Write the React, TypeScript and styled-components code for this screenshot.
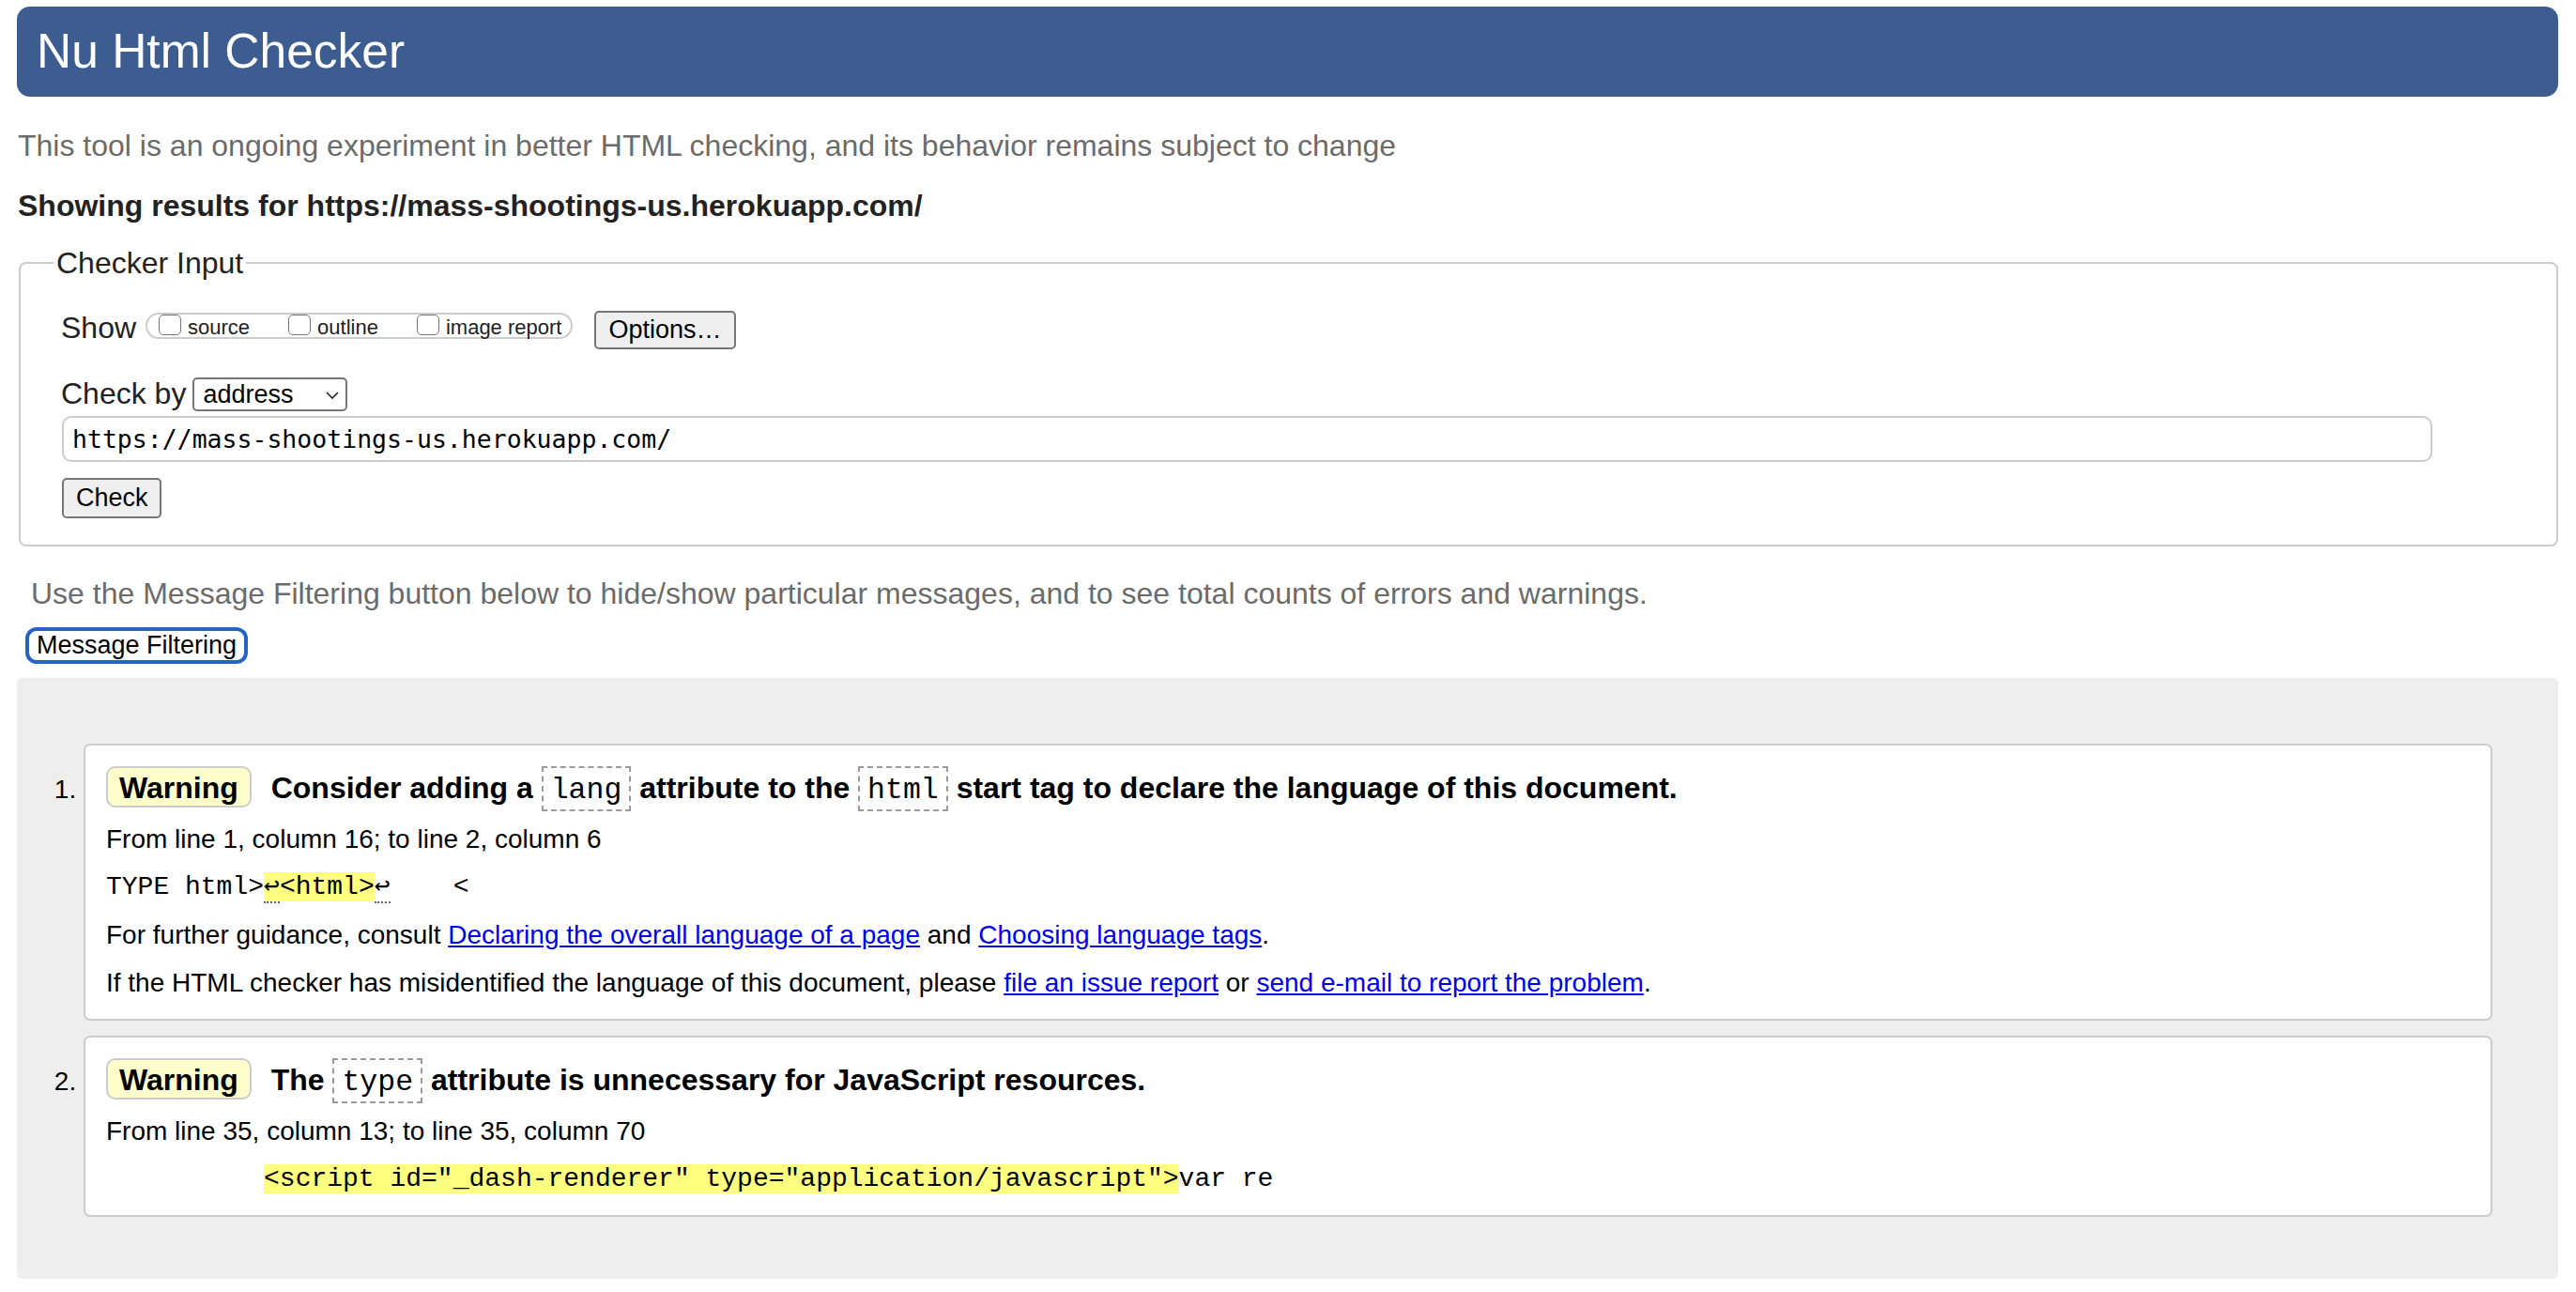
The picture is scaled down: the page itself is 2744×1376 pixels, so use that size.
import React from "react";
import styled, { createGlobalStyle } from "styled-components";

const GlobalStyle = createGlobalStyle`
  html, body { margin: 0; padding: 0; background: #ffffff; }
  body {
    font-family: "Liberation Sans", Arial, Helvetica, sans-serif;
    color: #222222;
  }
  * { box-sizing: border-box; }
`;

const Page = styled.div`
  display: flex;
  flex-direction: column;
  padding: 7px 19px 16px 18px;
`;

const Header = styled.header`
  height: 96px;
  display: flex;
  align-items: center;
  padding-left: 21px;
  background: #3d5d90;
  border-radius: 14px;
`;

const Title = styled.h1`
  margin: 0;
  font-size: 51.5px;
  line-height: 1;
  font-weight: normal;
  color: #ffffff;
`;

const Intro = styled.p<{ $top: number; $indent?: number }>`
  margin: ${(p) => p.$top}px 0 0;
  padding-left: ${(p) => p.$indent ?? 1}px;
  font-size: 32px;
  line-height: 40px;
  color: #6b6b6b;
`;

const ResultsFor = styled.h2`
  margin: 24px 0 0;
  padding-left: 1px;
  font-size: 32px;
  line-height: 40px;
  font-weight: bold;
  color: #222222;
`;

const Fieldset = styled.fieldset`
  margin: 21px 0 0 2px;
  min-width: 0;
  border: 2px solid #cccccc;
  border-radius: 8px;
  padding: 29px 0 28px 43px;
  display: flex;
  flex-direction: column;
  align-items: flex-start;
`;

const Legend = styled.legend`
  margin-left: -8px;
  padding: 0 3px;
  font-size: 32px;
  line-height: 40px;
  color: #222222;
`;

const Row = styled.div<{ $top?: number }>`
  display: flex;
  align-items: flex-start;
  margin-top: ${(p) => p.$top ?? 0}px;
`;

const FieldLabel = styled.span`
  font-size: 32px;
  line-height: 40px;
  color: #222222;
`;

const Group = styled.div`
  margin: 4px 0 0 10px;
  height: 28px;
  display: flex;
  align-items: flex-start;
  gap: 41px;
  padding: 0 10px 0 12px;
  border: 2px solid #cccccc;
  border-radius: 14px;
`;

const OptionLabel = styled.label`
  display: flex;
  align-items: flex-start;
  gap: 7px;
  font-size: 22px;
  line-height: 20px;
  color: #222222;
`;

const OptionText = styled.span`
  padding-top: 4px;
`;

const CheckBox = styled.input`
  appearance: none;
  -webkit-appearance: none;
  margin: 0;
  width: 24px;
  height: 22px;
  border: 1.5px solid #767676;
  border-radius: 5px;
  background: #ffffff;
`;

const Button = styled.button<{ $h: number; $w?: number }>`
  height: ${(p) => p.$h}px;
  ${(p) => (p.$w ? `width: ${p.$w}px;` : "")}
  padding: 0 13px;
  font-family: "Liberation Sans", Arial, Helvetica, sans-serif;
  font-size: 27px;
  color: #000000;
  background: #efefef;
  border: 2px solid #767676;
  border-radius: 5px;
`;

const OptionsButton = styled(Button)`
  margin: 2px 0 0 23px;
`;

const CheckButton = styled(Button)`
  margin: 17px 0 0 1px;
`;

const SelectWrap = styled.div`
  position: relative;
  margin: 3px 0 0 7px;
`;

const Select = styled.select`
  appearance: none;
  -webkit-appearance: none;
  display: block;
  width: 165px;
  height: 36px;
  padding: 0 9px;
  font-family: "Liberation Sans", Arial, Helvetica, sans-serif;
  font-size: 27px;
  color: #000000;
  background: #ffffff;
  border: 2px solid #767676;
  border-radius: 5px;
`;

const Chevron = styled.svg`
  position: absolute;
  right: 9px;
  top: 15px;
  pointer-events: none;
`;

const UrlInput = styled.input`
  margin: 4px 0 0 1px;
  width: 95%;
  height: 49px;
  padding: 0 9px;
  font-family: "DejaVu Sans Mono", "Liberation Mono", monospace;
  font-size: 26.5px;
  color: #000000;
  background: #ffffff;
  border: 2px solid #cccccc;
  border-radius: 10px;
`;

const FilterButton = styled.button`
  align-self: flex-start;
  margin: 16px 0 0 9px;
  height: 39px;
  padding: 0 8px;
  font-family: "Liberation Sans", Arial, Helvetica, sans-serif;
  font-size: 27px;
  color: #000000;
  background: #ffffff;
  border: 4px solid #2463c8;
  border-radius: 12px;
`;

const Results = styled.section`
  margin-top: 15px;
  padding: 70px 70px 66px 71px;
  background: #eeeeee;
  border-radius: 6px;
`;

const MessageList = styled.ol`
  margin: 0;
  padding: 0;
  list-style: decimal outside;
`;

const Message = styled.li`
  font-size: 28px;
  color: #000000;
  background: #ffffff;
  border: 2px solid #cccccc;
  border-radius: 7px;
  padding: 22px 22px 21px;
  & + & {
    margin-top: 16px;
  }
`;

const MessageBody = styled.div`
  display: flex;
  flex-direction: column;
  gap: 17px;
`;

const MessageTitle = styled.p`
  margin: 0 0 -4px;
  font-size: 32px;
  line-height: 40px;
  font-weight: bold;
  color: #000000;
`;

const Badge = styled.strong`
  margin-right: 12px;
  padding: 3px 12px 1px;
  background: #ffffcc;
  border: 2px solid #cccccc;
  border-radius: 10px;
`;

const CodeTok = styled.code`
  display: inline-block;
  padding: 6px 8px 2px;
  font-family: "Liberation Mono", "Courier New", monospace;
  font-size: 31.5px;
  line-height: 36px;
  font-weight: normal;
  border: 2px dashed #9a9a9a;
`;

const Para = styled.p`
  margin: 0;
  font-size: 28px;
  line-height: 34px;
`;

const Extract = styled.p`
  margin: 0;
  font-family: "Liberation Mono", "Courier New", monospace;
  font-size: 28px;
  line-height: 34px;
  white-space: pre;
`;

const Mark = styled.mark`
  background: #ffff80;
  color: inherit;
`;

const LineFeed = styled.span`
  border-bottom: 2px dotted #666666;
`;

const Link = styled.a`
  color: #0000ee;
  text-decoration: underline;
`;

export default function App() {
  return (
    <>
      <GlobalStyle />
      <Page>
        <Header>
          <Title>Nu Html Checker</Title>
        </Header>
        <Intro $top={32}>
          This tool is an ongoing experiment in better HTML checking, and its behavior remains subject to change
        </Intro>
        <ResultsFor>Showing results for https://mass-shootings-us.herokuapp.com/</ResultsFor>

        <Fieldset>
          <Legend>Checker Input</Legend>
          <Row>
            <FieldLabel>Show</FieldLabel>
            <Group>
              <OptionLabel>
                <CheckBox type="checkbox" />
                <OptionText>source</OptionText>
              </OptionLabel>
              <OptionLabel>
                <CheckBox type="checkbox" />
                <OptionText>outline</OptionText>
              </OptionLabel>
              <OptionLabel>
                <CheckBox type="checkbox" />
                <OptionText>image report</OptionText>
              </OptionLabel>
            </Group>
            <OptionsButton type="button" $h={41}>
              Options…
            </OptionsButton>
          </Row>
          <Row $top={27}>
            <FieldLabel>Check by</FieldLabel>
            <SelectWrap>
              <Select defaultValue="address">
                <option value="address">address</option>
                <option value="file">file upload</option>
                <option value="text">text input</option>
              </Select>
              <Chevron width="14" height="8" viewBox="0 0 14 8">
                <polyline points="1,1 7,7 13,1" fill="none" stroke="#222" strokeWidth="1.6" />
              </Chevron>
            </SelectWrap>
          </Row>
          <UrlInput type="url" defaultValue="https://mass-shootings-us.herokuapp.com/" />
          <CheckButton type="button" $h={43} $w={106}>
            Check
          </CheckButton>
        </Fieldset>

        <Intro $top={30} $indent={15}>
          Use the Message Filtering button below to hide/show particular messages, and to see total counts of errors and warnings.
        </Intro>
        <FilterButton type="button">Message Filtering</FilterButton>

        <Results>
          <MessageList>
            <Message>
              <MessageBody>
                <MessageTitle>
                  <Badge>Warning</Badge> Consider adding a <CodeTok>lang</CodeTok> attribute to the{" "}
                  <CodeTok>html</CodeTok> start tag to declare the language of this document.
                </MessageTitle>
                <Para>From line 1, column 16; to line 2, column 6</Para>
                <Extract>
                  {"TYPE html>"}
                  <Mark>
                    <LineFeed>↩</LineFeed>
                    {"<html>"}
                  </Mark>
                  <LineFeed>↩</LineFeed>
                  {"    <"}
                </Extract>
                <Para>
                  For further guidance, consult <Link href="#">Declaring the overall language of a page</Link> and{" "}
                  <Link href="#">Choosing language tags</Link>.
                </Para>
                <Para>
                  If the HTML checker has misidentified the language of this document, please{" "}
                  <Link href="#">file an issue report</Link> or <Link href="#">send e-mail to report the problem</Link>.
                </Para>
              </MessageBody>
            </Message>
            <Message>
              <MessageBody>
                <MessageTitle>
                  <Badge>Warning</Badge> The <CodeTok>type</CodeTok> attribute is unnecessary for JavaScript resources.
                </MessageTitle>
                <Para>From line 35, column 13; to line 35, column 70</Para>
                <Extract>
                  {"          "}
                  <Mark>{'<script id="_dash-renderer" type="application/javascript">'}</Mark>
                  {"var re"}
                </Extract>
              </MessageBody>
            </Message>
          </MessageList>
        </Results>
      </Page>
    </>
  );
}
